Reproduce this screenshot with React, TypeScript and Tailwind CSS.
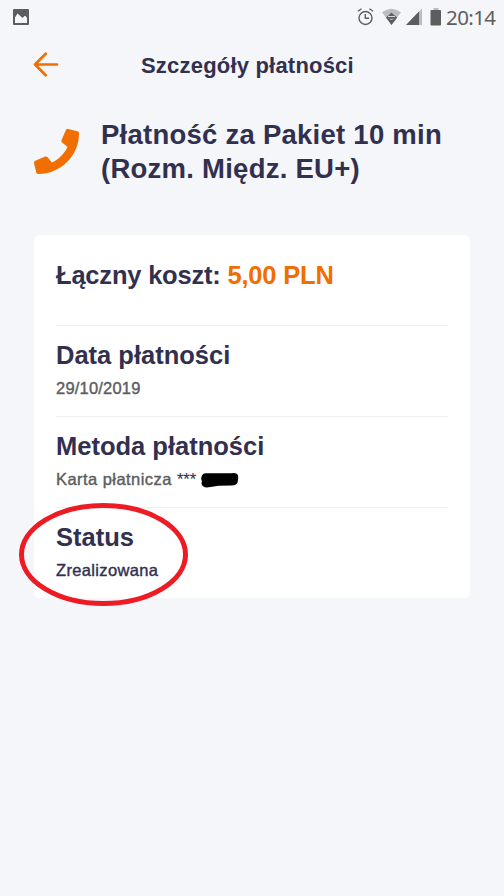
import type { ReactNode } from "react";
import { FaPhone } from "react-icons/fa";

type DetailRowProps = {
  title: string;
  children: ReactNode;
};

function StatusBar() {
  return (
    <div className="flex h-[34px] items-start justify-between pl-[13px] text-[#5d5d5f]">
      <svg width="16" height="16" viewBox="0 0 16 16" className="mt-[9px]">
        <path
          fill="currentColor"
          fillRule="evenodd"
          d="M1 0h14q1 0 1 1v14q0 1-1 1H1q-1 0-1-1V1q0-1 1-1zM2 14h12V9l-1.500-2h-1l-2 2-5-4.500L2 8.500z"
        />
      </svg>

      <div className="flex items-start">
        <svg width="96" height="34" viewBox="0 0 96 34">
          {/* alarm clock */}
          <g fill="none" stroke="currentColor" strokeWidth="1.400">
            <circle cx="15.500" cy="18" r="6.500" />
            <path d="M15.300 14v4.200h3.800M8 11.300l3.500-2.500M23 11.300l-3.500-2.500" />
          </g>
          {/* wifi */}
          <path fill="#bbbcc0" d="M32 12.300q9.500-7 19 0L41.500 25z" />
          <path fill="currentColor" d="M36 17.500l3-2.500 2.500-2.500L44 15l3.200 2.500L41.500 25z" />
          <path
            fill="none"
            stroke="#d8d9dc"
            strokeWidth="1"
            d="M38 16.500h7M40 18.500l1.500 1.500 1.500-1.500"
          />
          {/* signal */}
          <path fill="#bbbcc0" d="M72 8.500V25H56z" />
          <path fill="currentColor" d="M69 11.500V25H56z" />
          {/* battery */}
          <path fill="#bbbcc0" d="M83.500 8h5v2h-5z" />
          <rect x="80.500" y="10" width="10.500" height="15.500" rx="0.800" fill="currentColor" />
        </svg>
        <span className="mt-[3px] w-[58px] whitespace-nowrap font-['Noto_Sans',sans-serif] text-[20.500px] leading-[28px] tracking-[-0.600px]">
          20:14
        </span>
      </div>
    </div>
  );
}

function DetailRow({ title, children }: DetailRowProps) {
  return (
    <section className="h-[91px] border-t border-[#ededf2] pt-[13px]">
      <h2 className="whitespace-nowrap text-[25.500px] font-bold leading-[32px]">{title}</h2>
      {children}
    </section>
  );
}

export default function App() {
  return (
    <div className="relative h-[896px] w-[504px] overflow-hidden bg-[#f4f6fa] font-['Liberation_Sans',Arial,sans-serif] text-[#32304f]">
      <StatusBar />

      <header className="flex h-[62px] items-center pl-[33px]">
        <button type="button" aria-label="Wstecz" className="text-[#f16e00]">
          <svg
            width="26"
            height="26"
            viewBox="0 0 26 26"
            fill="none"
            stroke="currentColor"
            strokeWidth="2.700"
            strokeLinecap="round"
            strokeLinejoin="round"
          >
            <path d="M12.700 1.800L2 12.500l10.700 10.700M2 12.500h22" />
          </svg>
        </button>
        <h1 className="ml-[82px] whitespace-nowrap pt-[2px] text-[22px] font-bold leading-[28px] tracking-[0.200px]">
          Szczegóły płatności
        </h1>
      </header>

      <div className="flex pl-[34px] pt-[22px]">
        <FaPhone size={45} className="mt-[11px] text-[#f16e00]" />
        <div className="ml-[22px] whitespace-nowrap text-[27.500px] font-bold leading-[34px] tracking-[0.250px]">
          <p>Płatność za Pakiet 10 min</p>
          <p>(Rozm. Międz. EU+)</p>
        </div>
      </div>

      <main className="ml-[34px] mt-[49px] h-[363px] w-[436px] rounded-[5px] bg-white px-[22px]">
        <div className="h-[90px] whitespace-nowrap pt-[24px] text-[25.500px] font-bold leading-[32px] tracking-[-0.200px]">
          <span>Łączny koszt:</span> <span className="text-[#f16e00]">5,00 PLN</span>
        </div>

        <DetailRow title="Data płatności">
          <p className="mt-[5px] text-[16.500px] leading-[24px] tracking-[0.200px] text-[#5d5d5f] [-webkit-text-stroke:0.4px]">
            29/10/2019
          </p>
        </DetailRow>

        <DetailRow title="Metoda płatności">
          <div className="mt-[5px] flex whitespace-pre text-[16.500px] leading-[24px] tracking-[0.450px] text-[#5d5d5f] [-webkit-text-stroke:0.4px]">
            <span>Karta płatnicza </span>
            <span className="tracking-normal text-[#32304f] [-webkit-text-stroke:0.1px]">***</span>
            <svg
              width="38"
              height="16"
              viewBox="0 0 38 16"
              fill="#000"
              stroke="none"
              className="ml-[5px] mt-[5px]"
            >
              <path d="M1 3.500Q2 .8 6 1.300h24q6-1.300 7 2.200.5 3.500-.5 7-1 3-6 3l-13 .2-8 1.300q-5 1-7-.5-3-2-1.500-5Q-.5 6.500 1 3.500z" />
            </svg>
          </div>
        </DetailRow>

        <DetailRow title="Status">
          <p className="mt-[5px] text-[16.500px] leading-[24px] tracking-[0.350px] [-webkit-text-stroke:0.4px]">
            Zrealizowana
          </p>
        </DetailRow>
      </main>

      <svg
        width="172"
        height="106"
        viewBox="0 0 172 106"
        className="absolute left-[18px] top-[501px]"
      >
        <ellipse
          cx="85.500"
          cy="53.500"
          rx="82"
          ry="49"
          fill="none"
          stroke="#ed1c24"
          strokeWidth="5"
        />
      </svg>
    </div>
  );
}
